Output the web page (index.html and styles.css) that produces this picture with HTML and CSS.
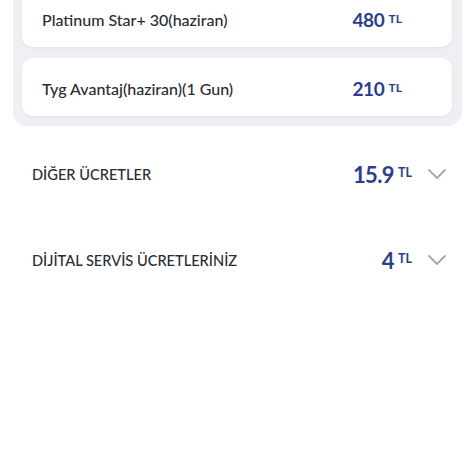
FILE: index.html
```html
<!DOCTYPE html>
<html lang="tr">
<head>
<meta charset="utf-8">
<link rel="stylesheet" href="styles.css">
</head>
<body>
<div class="panel">
  <div class="card">
    <span class="label">Platinum Star+ 30(haziran)</span>
    <span class="price"><span class="num">480</span><span class="cur">TL</span></span>
  </div>
  <div class="card">
    <span class="label">Tyg Avantaj(haziran)(1 Gun)</span>
    <span class="price"><span class="num">210</span><span class="cur">TL</span></span>
  </div>
</div>
<div class="row">
  <span class="title">DİĞER ÜCRETLER</span>
  <span class="right">
    <span class="price big"><span class="num">15.9</span><span class="cur">TL</span></span>
    <svg class="chev" width="18" height="10" viewBox="0 0 18 10"><path d="M1 1 L9 9 L17 1" fill="none" stroke="#a3a7b0" stroke-width="1.8" stroke-linecap="round" stroke-linejoin="round"/></svg>
  </span>
</div>
<div class="row">
  <span class="title">DİJİTAL SERVİS ÜCRETLERİNİZ</span>
  <span class="right">
    <span class="price big"><span class="num">4</span><span class="cur">TL</span></span>
    <svg class="chev" width="18" height="10" viewBox="0 0 18 10"><path d="M1 1 L9 9 L17 1" fill="none" stroke="#a3a7b0" stroke-width="1.8" stroke-linecap="round" stroke-linejoin="round"/></svg>
  </span>
</div>
</body>
</html>
```
FILE: styles.css
```css
html, body {
  margin: 0;
  padding: 0;
  background: #ffffff;
  font-family: Lato, "Noto Sans", sans-serif;
  color: #2a2b33;
}
body {
  width: 474px;
  height: 474px;
  overflow: hidden;
}
.panel {
  margin: -21px 12px 0 13px;
  padding: 10px 10px 10px 9px;
  background: #eef0f3;
  border-radius: 14px;
  display: flex;
  flex-direction: column;
  gap: 11px;
}
.card {
  height: 58px;
  background: #ffffff;
  border-radius: 10px;
  box-shadow: 0 1px 3px rgba(40, 50, 80, 0.08);
  display: flex;
  align-items: center;
  justify-content: space-between;
  padding: 2px 50px 0 20px;
  box-sizing: border-box;
}
.label {
  font-size: 16px;
  font-weight: 500;
  letter-spacing: 0;
}
.price {
  color: #2c3d8d;
  font-weight: 700;
  display: flex;
  align-items: baseline;
  gap: 4px;
}
.price .num {
  font-size: 19px;
  letter-spacing: -0.3px;
}
.price .cur {
  font-size: 12px;
  position: relative;
  top: -4px;
}
.price.big .num {
  font-size: 22px;
  letter-spacing: -0.6px;
}
.price.big .cur {
  font-size: 12.5px;
  top: -6px;
}
.row {
  height: 86px;
  display: flex;
  align-items: center;
  justify-content: space-between;
  padding: 0 28px 0 32px;
}
.panel + .row {
  margin-top: 5px;
}
.title {
  font-size: 14.6px;
  font-weight: 500;
  letter-spacing: 0;
}
.right {
  display: flex;
  align-items: center;
  gap: 16px;
}
.chev {
  display: block;
}
```
